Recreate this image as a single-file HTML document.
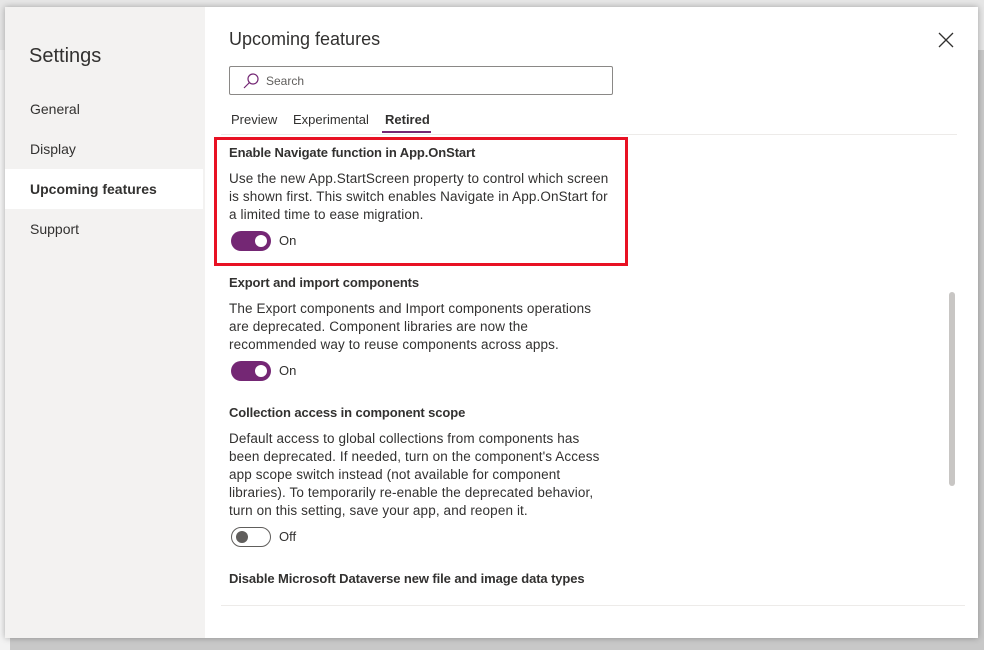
<!DOCTYPE html>
<html><head><style>
*{margin:0;padding:0;box-sizing:border-box}
body{width:984px;height:643px;background:#c8c8c8;font-family:"Liberation Sans",sans-serif;position:relative;overflow:hidden;color:#323130}
.bgtop{position:absolute;left:0;top:0;width:984px;height:50px;background:#e6e6e6}
.bgleft{position:absolute;left:0;top:50px;width:10px;height:600px;background:#f3f3f3}
.modal{position:absolute;left:5px;top:7px;width:973px;height:631px;background:#fff;box-shadow:0 0 6px rgba(0,0,0,.3)}
.side{position:absolute;left:0;top:0;width:200px;height:631px;background:#f3f2f1}
.side h1{position:absolute;left:24px;top:38px;font-size:20px;font-weight:normal;color:#323130}
.nav{position:absolute;left:0;width:198px;height:40px;line-height:40px;padding-left:25px;font-size:14px;color:#323130}
.nav.sel{background:#fff;font-weight:bold}
.abs{position:absolute}
.title{left:224px;top:22px;font-size:18px}
.search{left:224px;top:59px;width:384px;height:29px;border:1px solid #8a8886;border-radius:2px}
.search span{position:absolute;left:36px;top:7px;font-size:12px;color:#605e5c}
.tab{top:105px;font-size:13px}
.line{left:216px;top:127px;width:736px;height:1px;background:#edebe9}
.hl{left:209px;top:130px;width:414px;height:129px;border:3px solid #e81123}
.h{font-size:13px;font-weight:bold;left:224px;letter-spacing:-0.1px}
.p{font-size:13.5px;left:224px;line-height:18px;white-space:nowrap;letter-spacing:0.12px}
.tg{width:40px;height:20px;border-radius:10px;left:226px}
.on{background:#742774}
.on::after{content:"";position:absolute;right:4px;top:4px;width:12px;height:12px;border-radius:6px;background:#fff}
.off{border:1px solid #605e5c}
.off::after{content:"";position:absolute;left:4px;top:3px;width:12px;height:12px;border-radius:6px;background:#605e5c}
.tl{font-size:13px;left:274px}
</style></head><body>
<div class="bgtop"></div><div class="bgleft"></div>
<div class="modal">
<div class="side"><h1>Settings</h1>
<div class="nav" style="top:82px">General</div>
<div class="nav" style="top:122px">Display</div>
<div class="nav sel" style="top:162px">Upcoming features</div>
<div class="nav" style="top:202px">Support</div>
</div>
<div class="abs title">Upcoming features</div>
<svg class="abs" style="left:932px;top:24px" width="18" height="18" viewBox="0 0 18 18"><path d="M2 2L16 16M16 2L2 16" stroke="#323130" stroke-width="1.3"/></svg>
<div class="abs search"><svg class="abs" style="left:12px;top:5px" width="18" height="18" viewBox="0 0 18 18"><circle cx="11" cy="7" r="5" fill="none" stroke="#742774" stroke-width="1.2"/><path d="M7.5 10.5L2 16" stroke="#742774" stroke-width="1.2"/></svg><span>Search</span></div>
<div class="abs tab" style="left:226px">Preview</div>
<div class="abs tab" style="left:288px">Experimental</div>
<div class="abs tab" style="left:380px;font-weight:bold">Retired</div>
<div class="abs" style="left:377px;top:124px;width:49px;height:2px;background:#742774"></div>
<div class="abs line"></div>
<div class="abs hl"></div>
<div class="abs h" style="top:138px">Enable Navigate function in App.OnStart</div>
<div class="abs p" style="top:163px">Use the new App.StartScreen property to control which screen<br>is shown first. This switch enables Navigate in App.OnStart for<br>a limited time to ease migration.</div>
<div class="abs tg on" style="top:224px"></div><div class="abs tl" style="top:226px">On</div>
<div class="abs h" style="top:268px">Export and import components</div>
<div class="abs p" style="top:293px">The Export components and Import components operations<br>are deprecated. Component libraries are now the<br>recommended way to reuse components across apps.</div>
<div class="abs tg on" style="top:354px"></div><div class="abs tl" style="top:356px">On</div>
<div class="abs h" style="top:398px">Collection access in component scope</div>
<div class="abs p" style="top:423px">Default access to global collections from components has<br>been deprecated. If needed, turn on the component's Access<br>app scope switch instead (not available for component<br>libraries). To temporarily re-enable the deprecated behavior,<br>turn on this setting, save your app, and reopen it.</div>
<div class="abs tg off" style="top:520px"></div><div class="abs tl" style="top:522px">Off</div>
<div class="abs h" style="top:564px">Disable Microsoft Dataverse new file and image data types</div>
<div class="abs" style="left:216px;top:598px;width:744px;height:1px;background:#edebe9"></div>
<div class="abs" style="left:944px;top:285px;width:6px;height:194px;background:#c8c6c4;border-radius:3px"></div>
</div>
</body></html>
